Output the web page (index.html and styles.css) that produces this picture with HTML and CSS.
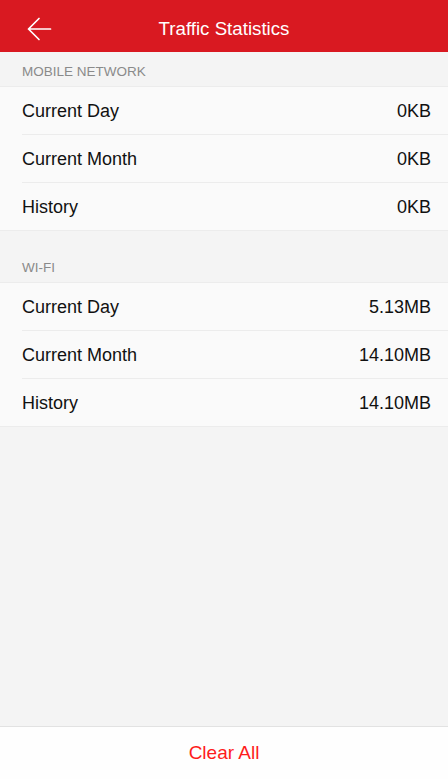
FILE: index.html
```html
<!DOCTYPE html>
<html lang="en">
<head>
<meta charset="utf-8">
<title>Traffic Statistics</title>
<link rel="stylesheet" href="styles.css">
</head>
<body>
<div class="app">
  <header class="topbar">
    <button class="back" aria-label="Back">
      <svg width="25" height="24" viewBox="0 0 25 24" fill="none" stroke="#fff" stroke-width="1.7" stroke-linecap="round" stroke-linejoin="round">
        <path d="M23.5 12H1.5M12 1.5L1.5 12L12 22.5"/>
      </svg>
    </button>
    <h1 class="title">Traffic Statistics</h1>
  </header>
  <main class="content">
    <section class="group">
      <div class="group-label">MOBILE NETWORK</div>
      <div class="list">
        <div class="row"><span class="name">Current Day</span><span class="value">0KB</span></div>
        <div class="row"><span class="name">Current Month</span><span class="value">0KB</span></div>
        <div class="row"><span class="name">History</span><span class="value">0KB</span></div>
      </div>
    </section>
    <section class="group group-spaced">
      <div class="group-label">WI-FI</div>
      <div class="list">
        <div class="row"><span class="name">Current Day</span><span class="value">5.13MB</span></div>
        <div class="row"><span class="name">Current Month</span><span class="value">14.10MB</span></div>
        <div class="row"><span class="name">History</span><span class="value">14.10MB</span></div>
      </div>
    </section>
  </main>
  <footer class="footer">
    <button class="clear">Clear All</button>
  </footer>
</div>
</body>
</html>
```
FILE: styles.css
```css
* { box-sizing: border-box; }
html, body {
  margin: 0;
  padding: 0;
  height: 100%;
}
body {
  font-family: "Liberation Sans", Arial, Helvetica, sans-serif;
  background: #f4f4f4;
  color: #111;
}
.app {
  display: flex;
  flex-direction: column;
  height: 100vh;
}
.topbar {
  position: relative;
  height: 52px;
  background: #d91921;
  display: flex;
  align-items: center;
  justify-content: center;
  padding-top: 5px;
  flex-shrink: 0;
}
.back {
  position: absolute;
  left: 27px;
  top: 17px;
  padding: 0;
  margin: 0;
  border: 0;
  background: none;
  width: 25px;
  height: 24px;
  display: block;
}
.back svg { display: block; }
.title {
  margin: 0;
  font-size: 18.7px;
  line-height: 22px;
  font-weight: normal;
  color: #fff;
}
.content {
  flex: 1;
}
.group-label {
  font-size: 13.5px;
  line-height: 16px;
  color: #8a8a8a;
  padding: 12px 22px 6px;
}
.group-spaced .group-label {
  padding-top: 29px;
}
.list {
  background: #fafafa;
  border-top: 1px solid #ececec;
  border-bottom: 1px solid #ececec;
  padding-left: 22px;
}
.row {
  display: flex;
  justify-content: space-between;
  align-items: center;
  height: 47px;
  padding-top: 1px;
  padding-right: 17px;
  font-size: 18px;
  color: #111;
}
.row + .row {
  border-top: 1px solid #ececec;
  height: 48px;
}
.footer {
  flex-shrink: 0;
  height: 53px;
  background: #fefefe;
  border-top: 1px solid #e2e2e2;
  display: flex;
  align-items: center;
  justify-content: center;
}
.clear {
  border: 0;
  background: none;
  padding: 0;
  font-family: "Liberation Sans", Arial, Helvetica, sans-serif;
  font-size: 19px;
  color: #fe1c1c;
}
```
